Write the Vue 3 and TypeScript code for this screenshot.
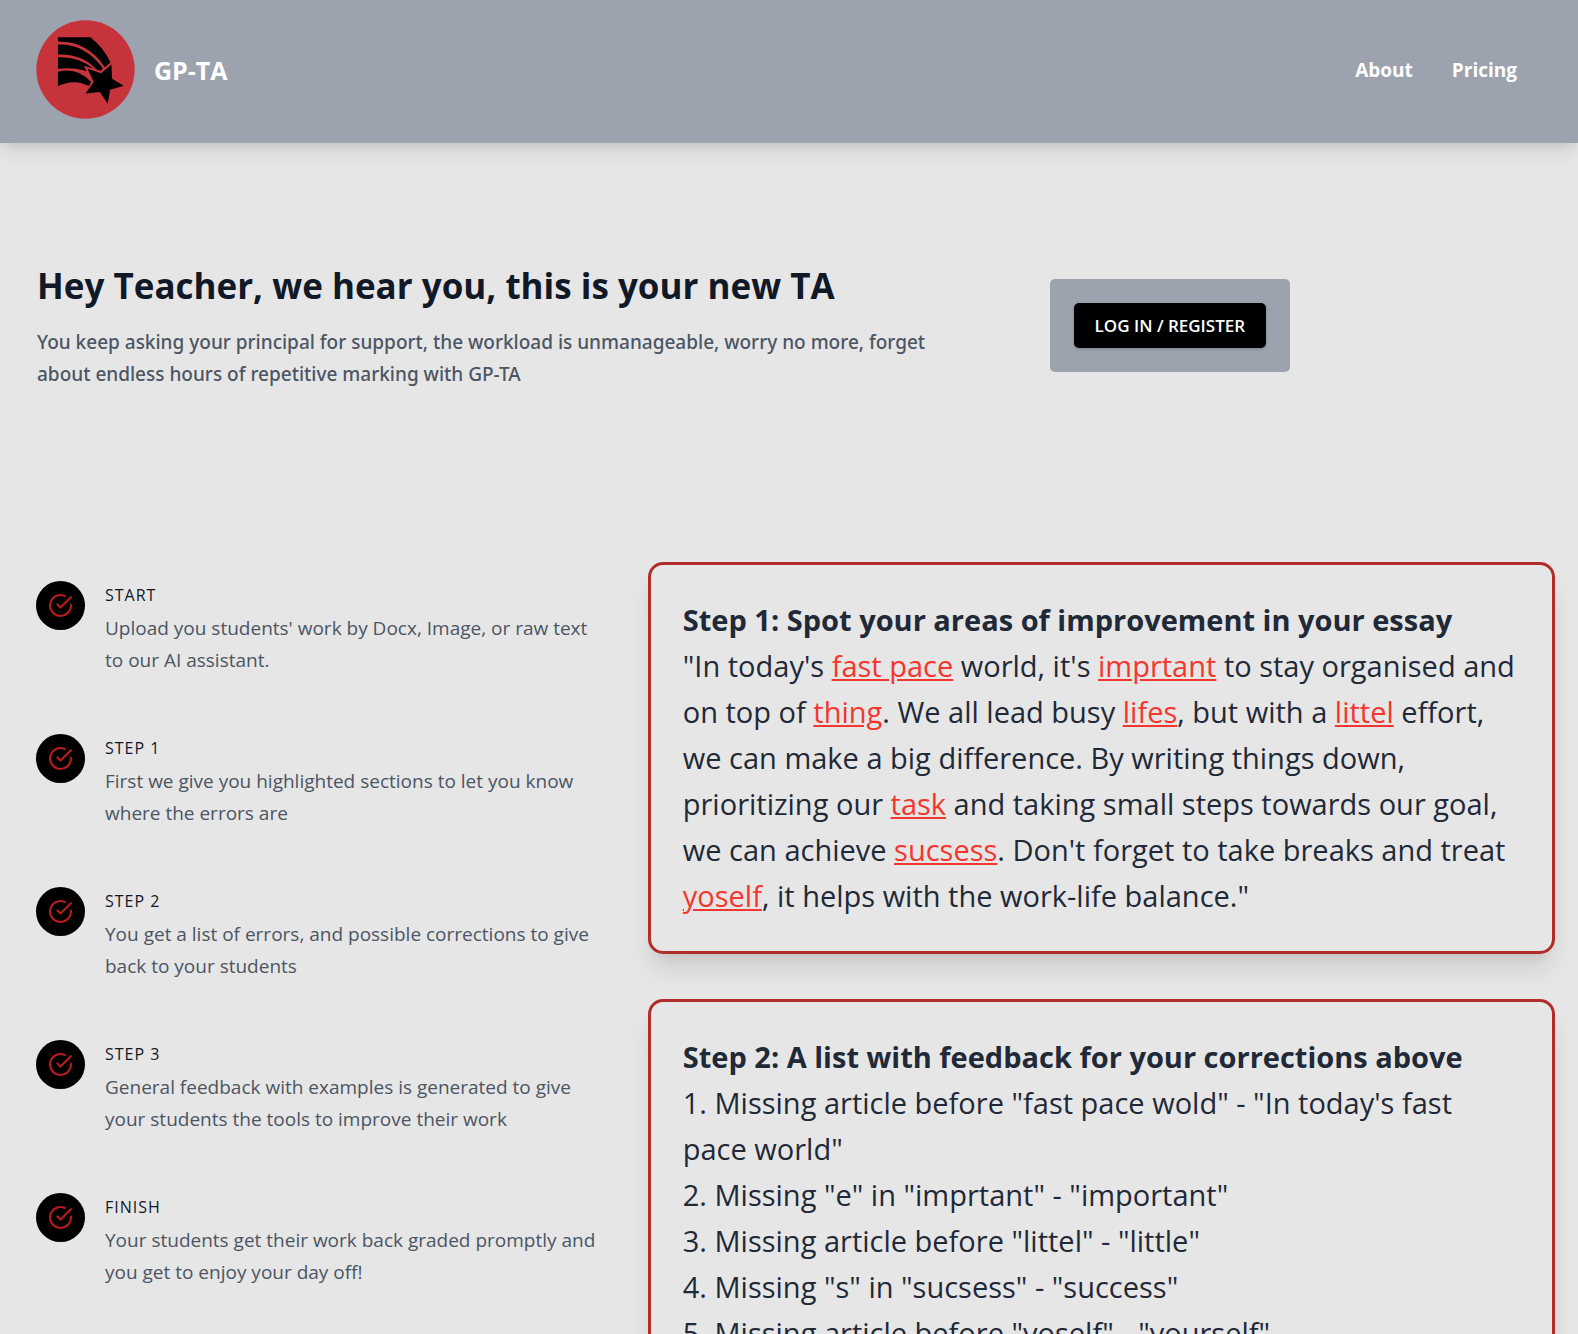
<script setup lang="ts">
interface Step {
  label: string
  text: string
}

interface Fragment {
  text: string
  error?: boolean
}

const steps: Step[] = [
  { label: 'START', text: "Upload you students' work by Docx, Image, or raw text to our AI assistant." },
  { label: 'STEP 1', text: 'First we give you highlighted sections to let you know where the errors are' },
  { label: 'STEP 2', text: 'You get a list of errors, and possible corrections to give back to your students' },
  { label: 'STEP 3', text: 'General feedback with examples is generated to give your students the tools to improve their work' },
  { label: 'FINISH', text: 'Your students get their work back graded promptly and you get to enjoy your day off!' },
]

const essay: Fragment[] = [
  { text: '"In today\'s ' },
  { text: 'fast pace', error: true },
  { text: " world, it's " },
  { text: 'imprtant', error: true },
  { text: ' to stay organised and on top of ' },
  { text: 'thing', error: true },
  { text: '. We all lead busy ' },
  { text: 'lifes', error: true },
  { text: ', but with a ' },
  { text: 'littel', error: true },
  { text: ' effort, we can make a big difference. By writing things down, prioritizing our ' },
  { text: 'task', error: true },
  { text: ' and taking small steps towards our goal, we can achieve ' },
  { text: 'sucsess', error: true },
  { text: ". Don't forget to take breaks and treat " },
  { text: 'yoself', error: true },
  { text: ', it helps with the work-life balance."' },
]

const corrections: string[] = [
  '1. Missing article before "fast pace wold" - "In today\'s fast pace world"',
  '2. Missing "e" in "imprtant" - "important"',
  '3. Missing article before "littel" - "little"',
  '4. Missing "s" in "sucsess" - "success"',
  '5. Missing article before "yoself" - "yourself"',
]
</script>

<template>
  <div class="page">
    <header class="header">
      <a class="brand" href="#">
        <svg class="logo" viewBox="107 59 298 298" aria-hidden="true">
          <circle cx="256" cy="208" r="148" fill="#c7333b" />
          <path d="M173 111H271Q313 145 331 187L314 201Q262 123 173 124Z" />
          <path d="M173 133Q254 130 308 204L303 212L290 209Q246 160 173 163Z" />
          <path d="M173 171Q235 168 279 205L251 197L259 213Q222 200 173 206Z" />
          <path d="M173 215Q231 200 273 246L266 258Q224 235 173 258Z" />
          <path d="M334 193L336 236L371 257L330 269L323 311L299 276L256 280L281 246L262 206L303 219Z" />
        </svg>
        <span class="brand-name">GP-TA</span>
      </a>
      <nav class="nav">
        <a href="#about">About</a>
        <a href="#pricing">Pricing</a>
      </nav>
    </header>

    <main>
      <section class="hero">
        <div>
          <h1>Hey Teacher, we hear you, this is your new TA</h1>
          <p>
            You keep asking your principal for support, the workload is unmanageable, worry no more,
            forget about endless hours of repetitive marking with GP-TA
          </p>
        </div>
        <div class="login-panel">
          <button type="button">LOG IN / REGISTER</button>
        </div>
      </section>

      <section class="content">
        <ol class="steps">
          <li v-for="step in steps" :key="step.label" class="step">
            <span class="marker">
              <svg viewBox="0 0 24 24" aria-hidden="true">
                <path d="M22 11.08V12a10 10 0 1 1-5.93-9.14" />
                <path d="M22 4L12 14.01l-3-3" />
              </svg>
            </span>
            <div class="step-body">
              <h2>{{ step.label }}</h2>
              <p>{{ step.text }}</p>
            </div>
          </li>
        </ol>

        <div class="cards">
          <article class="card">
            <h2>Step 1: Spot your areas of improvement in your essay</h2>
            <p><template v-for="(part, i) in essay" :key="i"><span v-if="part.error" class="error">{{ part.text }}</span><template v-else>{{ part.text }}</template></template></p>
          </article>
          <article class="card">
            <h2>Step 2: A list with feedback for your corrections above</h2>
            <p v-for="line in corrections" :key="line">{{ line }}</p>
          </article>
        </div>
      </section>
    </main>
  </div>
</template>

<style>
html {
  background: #e6e6e6;
}

body {
  margin: 0;
}
</style>

<style scoped>
.page {
  height: 100vh;
  overflow: hidden;
  background: #e6e6e6;
  color: #1f2937;
  font-family: "Segoe UI", "Open Sans", "Noto Sans", sans-serif;
}

h1,
h2,
p,
ol {
  margin: 0;
  padding: 0;
}

.header {
  display: flex;
  align-items: center;
  justify-content: space-between;
  padding: 20px 61px 24px 36px;
  background: #9ca3af;
  box-shadow: 0 12px 18px -4px rgba(0, 0, 0, 0.1), 0 5px 7px -2px rgba(0, 0, 0, 0.05);
}

.header a {
  color: #fff;
  font-weight: 700;
  text-decoration: none;
}

.brand {
  display: flex;
  align-items: center;
  gap: 19px;
}

.logo {
  width: 99px;
  height: 99px;
}

.brand-name {
  font-size: 25px;
  line-height: 32px;
}

.nav {
  display: flex;
  gap: 39px;
  font-size: 19px;
  line-height: 32px;
}

.hero {
  display: grid;
  grid-template-columns: 13fr 7fr;
  gap: 100px;
  align-items: start;
  padding: 121px 37px 172px;
}

.hero h1 {
  color: #111827;
  font-size: 35px;
  font-weight: 700;
  line-height: 43px;
}

.hero p {
  margin-top: 19px;
  color: #4b5563;
  font-family: "Segoe UI", "Noto Sans", sans-serif;
  font-size: 19px;
  font-weight: 500;
  line-height: 32px;
}

.login-panel {
  justify-self: start;
  margin-top: 15px;
  padding: 24px;
  border-radius: 5px;
  background: #9ca3af;
}

.login-panel button {
  display: block;
  padding: 10px 21px;
  border: 0;
  border-radius: 5px;
  background: #000;
  box-shadow: 0 1px 3px rgba(0, 0, 0, 0.2);
  color: #fff;
  font-family: inherit;
  font-size: 17px;
  font-weight: 600;
  line-height: 25px;
}

.content {
  display: grid;
  grid-template-columns: 5fr 8fr;
  gap: 41px;
  align-items: start;
  padding: 0 17px 0 36px;
}

.steps {
  padding-top: 19px;
  list-style: none;
}

.step {
  display: flex;
  gap: 20px;
  align-items: flex-start;
  padding-bottom: 58px;
  position: relative;
}

.step:not(:last-child)::before {
  content: "";
  position: absolute;
  top: 0;
  bottom: 0;
  left: 22px;
  width: 4px;
  background: #e5e7eb;
}

.marker {
  display: flex;
  flex: none;
  align-items: center;
  justify-content: center;
  width: 49px;
  height: 49px;
  border-radius: 50%;
  background: #000;
  position: relative;
}

.marker svg {
  width: 25px;
  height: 25px;
  fill: none;
  stroke: #b91c1c;
  stroke-width: 2;
  stroke-linecap: round;
  stroke-linejoin: round;
}

.step h2 {
  color: #111827;
  font-size: 16px;
  font-weight: 500;
  line-height: 28px;
  letter-spacing: 1px;
}

.step p {
  margin-top: 3px;
  color: #4b5563;
  font-size: 19px;
  line-height: 32px;
}

.cards {
  display: grid;
  gap: 45px;
  padding-right: 6px;
}

.card {
  padding: 32px;
  border: 3px solid #b12d29;
  border-radius: 15px;
  background: #e6e6e6;
  box-shadow: 0 18px 26px -5px rgba(0, 0, 0, 0.12), 0 8px 10px -5px rgba(0, 0, 0, 0.05);
}

.card h2,
.card p {
  font-size: 29px;
  line-height: 46px;
}

.card h2 {
  font-weight: 700;
}

.card p {
  font-weight: 400;
}

.error {
  color: #f4362e;
  text-decoration: underline;
}
</style>
